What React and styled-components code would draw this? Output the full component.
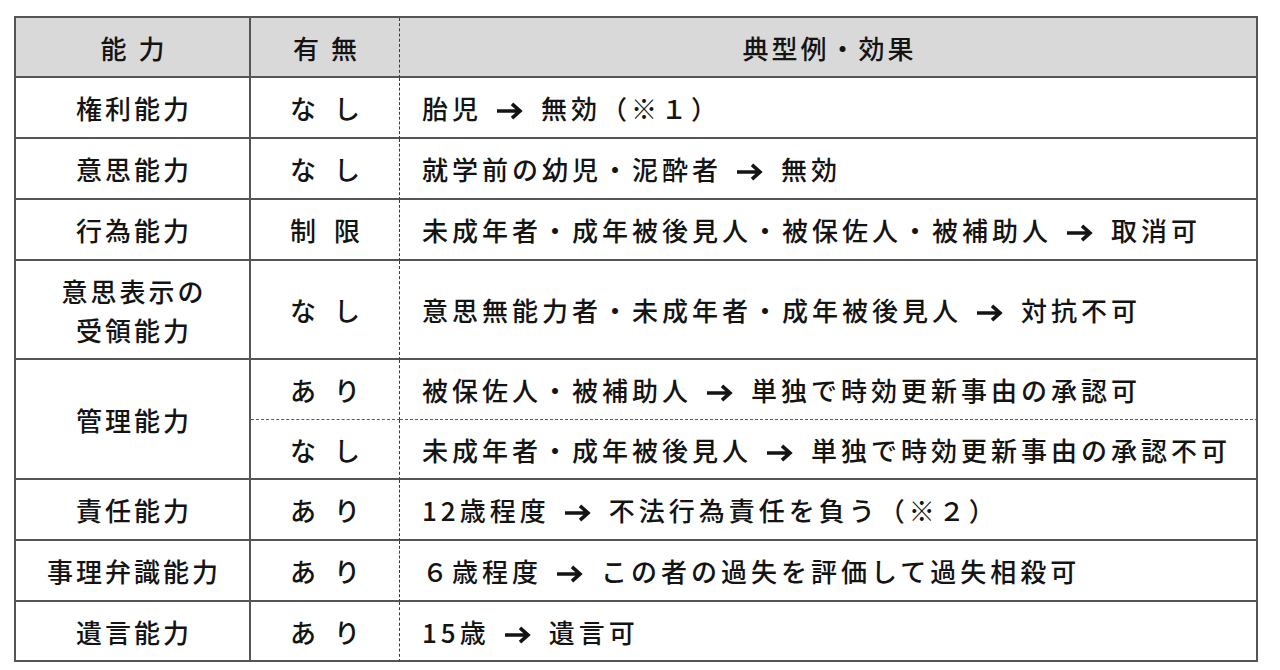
import React from "react";
import styled, { createGlobalStyle } from "styled-components";

const GlobalStyle = createGlobalStyle`
  html, body {
    margin: 0;
    padding: 0;
    background: #ffffff;
  }
  body {
    font-family: "Noto Sans CJK JP", "Noto Sans", sans-serif;
    color: #141414;
  }
`;

const Page = styled.div`
  padding: 16px 22px 0 14px;
`;

const Table = styled.table`
  width: 1244px;
  border-collapse: separate;
  border-spacing: 0;
  table-layout: fixed;
  border-top: 2px solid #555555;
  border-left: 2px solid #555555;
  font-size: 26px;
  font-weight: 500;
  line-height: 1.5;
`;

const Row = styled.tr`
  height: ${(p) => p.$h}px;
`;

const Cell = styled.td`
  box-sizing: border-box;
  padding: 0;
  vertical-align: middle;
  white-space: nowrap;
  border-right: ${(p) => (p.$dashedRight ? "1px dashed #3a3a3a" : "2px solid #555555")};
  border-bottom: ${(p) => (p.$dashedBottom ? "1px dashed #5a5a5a" : "2px solid #555555")};
`;

const HeadCell = styled(Cell).attrs({ as: "th" })`
  background: #d9d9d9;
  font-weight: 500;
  text-align: center;
  letter-spacing: 3px;
  padding-left: 3px;
`;

const NameCell = styled(Cell)`
  text-align: center;
  letter-spacing: 3px;
  padding-left: 3px;
`;

const StatusCell = styled(Cell)`
  text-align: center;
  letter-spacing: 3px;
  word-spacing: 6px;
  padding-left: 3px;
`;

const DetailCell = styled(Cell)`
  padding-left: 22px;
  letter-spacing: 4px;
`;

const ArrowMark = styled.svg`
  display: inline-block;
  width: 27px;
  height: 18px;
  margin: 0 18px 0 14px;
  vertical-align: -1px;
`;

const Arrow = () => (
  <ArrowMark viewBox="0 0 27 18" aria-hidden="true">
    <path
      d="M1 9 H24 M16 1.8 L24 9 L16 16.2"
      fill="none"
      stroke="#141414"
      strokeWidth="3.6"
      strokeLinecap="butt"
      strokeLinejoin="miter"
    />
  </ArrowMark>
);

const Detail = ({ from, to }) => (
  <>
    {from}
    <Arrow />
    {to}
  </>
);

const rows = [
  { name: "権利能力", status: "な し", from: "胎児", to: "無効（※１）" },
  { name: "意思能力", status: "な し", from: "就学前の幼児・泥酔者", to: "無効" },
  { name: "行為能力", status: "制 限", from: "未成年者・成年被後見人・被保佐人・被補助人", to: "取消可" },
];

const tailRows = [
  { name: "責任能力", status: "あ り", from: "12歳程度", to: "不法行為責任を負う（※２）" },
  { name: "事理弁識能力", status: "あ り", from: "６歳程度", to: "この者の過失を評価して過失相殺可" },
  { name: "遺言能力", status: "あ り", from: "15歳", to: "遺言可", h: 60 },
];

export default function App() {
  return (
    <Page>
      <GlobalStyle />
      <Table>
        <colgroup>
          <col style={{ width: 235 }} />
          <col style={{ width: 149 }} />
          <col />
        </colgroup>
        <thead>
          <Row $h={60}>
            <HeadCell>能 力</HeadCell>
            <HeadCell $dashedRight>有 無</HeadCell>
            <HeadCell>典型例・効果</HeadCell>
          </Row>
        </thead>
        <tbody>
          {rows.map((r) => (
            <Row $h={61} key={r.name}>
              <NameCell>{r.name}</NameCell>
              <StatusCell $dashedRight>{r.status}</StatusCell>
              <DetailCell>
                <Detail from={r.from} to={r.to} />
              </DetailCell>
            </Row>
          ))}
          <Row $h={99}>
            <NameCell>
              意思表示の
              <br />
              受領能力
            </NameCell>
            <StatusCell $dashedRight>な し</StatusCell>
            <DetailCell>
              <Detail from="意思無能力者・未成年者・成年被後見人" to="対抗不可" />
            </DetailCell>
          </Row>
          <Row $h={60}>
            <NameCell rowSpan={2}>管理能力</NameCell>
            <StatusCell $dashedRight $dashedBottom>
              あ り
            </StatusCell>
            <DetailCell $dashedBottom>
              <Detail from="被保佐人・被補助人" to="単独で時効更新事由の承認可" />
            </DetailCell>
          </Row>
          <Row $h={60}>
            <StatusCell $dashedRight>な し</StatusCell>
            <DetailCell>
              <Detail from="未成年者・成年被後見人" to="単独で時効更新事由の承認不可" />
            </DetailCell>
          </Row>
          {tailRows.map((r) => (
            <Row $h={r.h || 61} key={r.name}>
              <NameCell>{r.name}</NameCell>
              <StatusCell $dashedRight>{r.status}</StatusCell>
              <DetailCell>
                <Detail from={r.from} to={r.to} />
              </DetailCell>
            </Row>
          ))}
        </tbody>
      </Table>
    </Page>
  );
}
